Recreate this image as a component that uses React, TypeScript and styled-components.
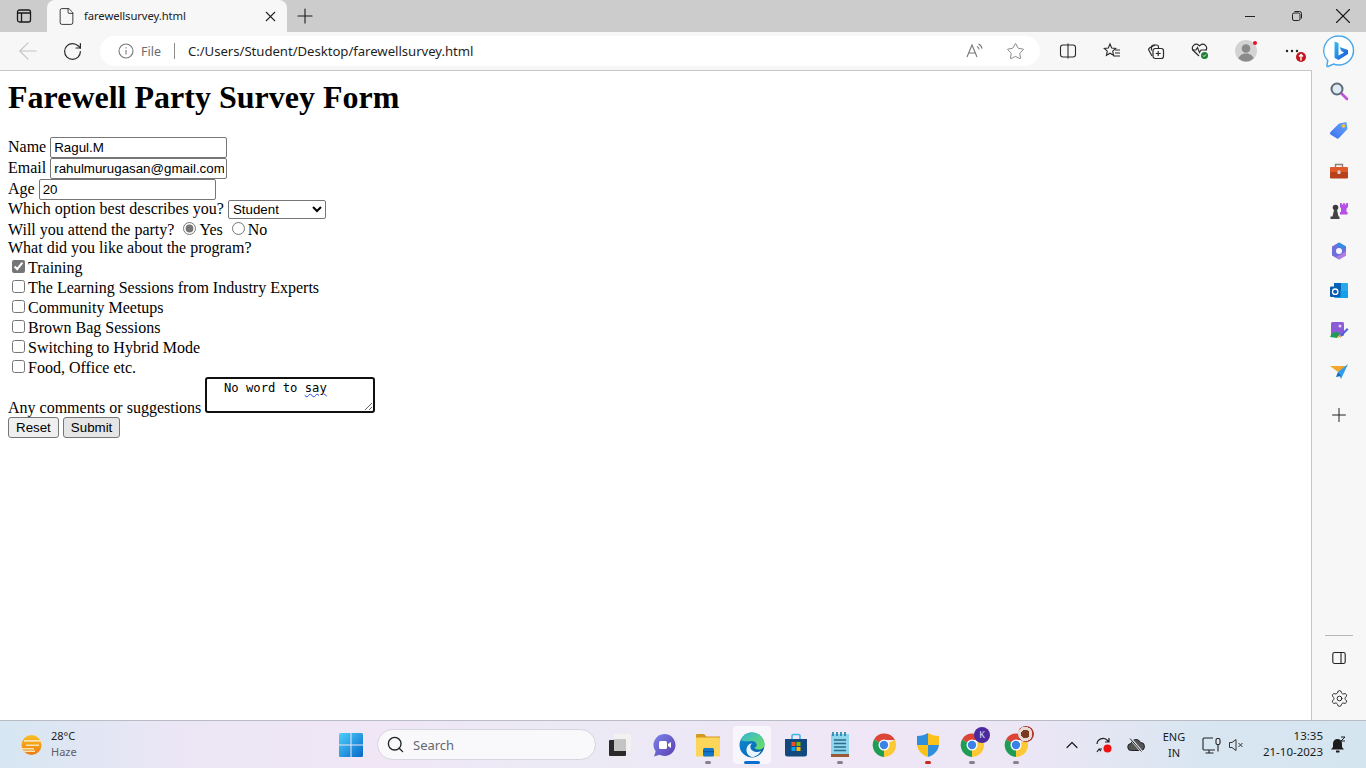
import React from 'react';
import styled, { createGlobalStyle } from 'styled-components';
import { ArrowLeft, ChevronUp, File, Plus, RotateCw, Search, Settings, Star, X } from 'lucide-react';

const GlobalStyle = createGlobalStyle`
  html, body { margin: 0; padding: 0; height: 100%; overflow: hidden; background: #fff; }
  * { box-sizing: border-box; }
`;

const uiFont = `'Noto Sans', 'Open Sans', sans-serif`;

const Window = styled.div`
  width: 1366px;
  height: 768px;
  display: flex;
  flex-direction: column;
  overflow: hidden;
  font-family: ${uiFont};
`;

const TabStrip = styled.div`
  height: 32px;
  flex: none;
  display: flex;
  align-items: stretch;
  background: #cccccc;
`;

const StripButton = styled.div<{ $w: number }>`
  width: ${p => p.$w}px;
  flex: none;
  display: flex;
  align-items: center;
  justify-content: center;
  color: #1a1a1a;
`;

const Tab = styled.div`
  width: 240px;
  flex: none;
  display: flex;
  align-items: center;
  background: #f7f7f7;
  border-radius: 8px 8px 0 0;
  padding: 0 8px 0 10px;
  color: #222;
`;

const TabTitle = styled.span`
  flex: 1;
  margin: 0 0 2px 8px;
  font-size: 11.3px;
  letter-spacing: -0.1px;
`;

const Spacer = styled.div`
  flex: 1;
`;

const Toolbar = styled.div`
  height: 38px;
  flex: none;
  display: flex;
  align-items: center;
  background: #f7f7f7;
`;

const ToolButton = styled.div<{ $w: number; $muted?: boolean }>`
  width: ${p => p.$w}px;
  height: 38px;
  flex: none;
  display: flex;
  align-items: center;
  justify-content: center;
  color: ${p => (p.$muted ? '#c4c4c4' : '#2b2b2b')};
`;

const AddressBar = styled.div`
  width: 940px;
  height: 30px;
  flex: none;
  display: flex;
  align-items: center;
  background: #fff;
  border-radius: 15px;
  padding-left: 18px;
  margin-right: 6px;
`;

const FileLabel = styled.span`
  margin-left: 7px;
  font-size: 12.5px;
  color: #6b6b6b;
`;

const AddressDivider = styled.span`
  width: 1px;
  height: 16px;
  margin: 0 13px;
  background: #8c8c8c;
`;

const AddressText = styled.span`
  flex: 1;
  font-size: 13.2px;
  color: #1f1f1f;
  letter-spacing: -0.05px;
`;

const AddressAction = styled.div`
  width: 40px;
  display: flex;
  justify-content: center;
  color: #777;
`;

const Middle = styled.div`
  flex: 1;
  min-height: 0;
  display: flex;
`;

const Page = styled.main`
  flex: 1;
  border-top: 1px solid #c6c6c6;
  padding: 8px;
  background: #fff;
  color: #000;
  font-family: 'Liberation Serif', 'Times New Roman', serif;
  font-size: 16px;
`;

const Heading = styled.h1`
  margin: 0 0 21px;
  font-size: 32px;
  font-weight: bold;
`;

const TextField = styled.input`
  width: 177px;
  height: 21px;
  padding: 1px 2px 1px 3px;
  border: 1px solid #767676;
  border-radius: 2px;
  font: 13.33px 'Liberation Sans', Arial, sans-serif;
  color: #000;
  background: #fff;
`;

const Dropdown = styled.select`
  width: 98px;
  height: 19px;
  border: 1px solid #767676;
  border-radius: 2px;
  font: 13.33px 'Liberation Sans', Arial, sans-serif;
  color: #000;
  background: #fff;
`;

const Choice = styled.input`
  accent-color: #767676;
`;

const Comments = styled.div`
  display: inline-block;
  width: 170px;
  height: 36px;
  margin-left: 4px;
  padding: 3px 2px 2px;
  border: 2px solid #101010;
  border-radius: 3px;
  overflow: auto;
  resize: both;
  white-space: pre;
  font: 12.2px/13px 'DejaVu Sans Mono', 'Liberation Mono', monospace;
  color: #000;
`;

const Misspelled = styled.span`
  text-decoration: underline wavy #1f45d8 1px;
`;

const FormButton = styled.button<{ $hover?: boolean }>`
  height: 21px;
  padding: 1px 7px;
  border: 1px solid #767676;
  border-radius: 3px;
  background: ${p => (p.$hover ? '#e5e5e5' : '#efefef')};
  font: 13.33px 'Liberation Sans', Arial, sans-serif;
  color: #000;
`;

const Sidebar = styled.aside`
  width: 55px;
  flex: none;
  display: flex;
  flex-direction: column;
  background: #f7f7f7;
  border-left: 1px solid #c6c6c6;
  padding: 1px 0 2px;
`;

const SideCell = styled.div<{ $h?: number }>`
  height: ${p => p.$h ?? 40}px;
  flex: none;
  display: flex;
  align-items: center;
  justify-content: center;
  color: #222;
`;

const SideDivider = styled.div`
  width: 28px;
  height: 1px;
  margin: auto 0 2px 13px;
  background: #b8b8b8;
`;

const Taskbar = styled.footer`
  height: 48px;
  flex: none;
  display: flex;
  align-items: center;
  border-top: 1px solid #b9bcc2;
  background: linear-gradient(90deg, #d6e6f2 0%, #ebe6f5 12%, #f0e6f6 28%, #ebeaf5 40%, #efe6f6 62%, #ebe6f5 76%, #d8e6f1 88%, #d5e5f0 100%);
  color: #1c1c1c;
`;

const Weather = styled.div`
  width: 335px;
  flex: none;
  display: flex;
  align-items: center;
  padding-left: 19px;
`;

const WeatherText = styled.div`
  margin: 0 0 2px 8px;
  font-size: 11px;
  line-height: 16px;
`;

const Muted = styled.div`
  color: #5e5e66;
`;

const StartButton = styled.div`
  width: 32px;
  display: flex;
  justify-content: center;
  flex: none;
`;

const SearchBox = styled.div`
  width: 219px;
  height: 31px;
  margin: 0 2px 0 10px;
  flex: none;
  display: flex;
  align-items: center;
  padding-left: 8px;
  border: 1px solid #d6d6de;
  border-radius: 16px;
  background: #f9f9fc;
  color: #222;
`;

const SearchLabel = styled.span`
  margin-left: 8px;
  font-size: 13px;
  color: #66666e;
`;

const AppCell = styled.div<{ $active?: boolean }>`
  position: relative;
  width: 38px;
  height: 38px;
  margin: 0 3px;
  flex: none;
  display: flex;
  align-items: center;
  justify-content: center;
  border-radius: 4px;
  background: ${p => (p.$active ? '#f8f5fc' : 'transparent')};
`;

const RunDot = styled.span<{ $color: string; $wide?: boolean }>`
  position: absolute;
  bottom: 0;
  left: 50%;
  transform: translateX(-50%);
  width: ${p => (p.$wide ? 16 : 6)}px;
  height: 3px;
  border-radius: 2px;
  background: ${p => p.$color};
`;

const Tray = styled.div`
  flex: 1;
  display: flex;
  align-items: center;
  padding-left: 18px;
`;

const TrayCell = styled.div<{ $w: number }>`
  width: ${p => p.$w}px;
  flex: none;
  display: flex;
  justify-content: center;
  color: #222;
`;

const Lang = styled.div`
  width: 44px;
  flex: none;
  text-align: center;
  font-size: 11px;
  line-height: 16px;
`;

const Clock = styled.div`
  width: 79px;
  margin-bottom: 2px;
  flex: none;
  text-align: right;
  font-size: 11.5px;
  line-height: 16px;
`;

const TabsIcon = () => (
  <svg width="16" height="16" viewBox="0 0 16 16" fill="none" stroke="#1a1a1a" strokeWidth="1.3">
    <rect x="1.5" y="2" width="13" height="12" rx="2" />
    <path d="M1.5 5h13M5.5 5v9" />
  </svg>
);

const MinimizeIcon = () => (
  <svg width="12" height="12" viewBox="0 0 12 12" stroke="#222"><path d="M1 6.5h10" /></svg>
);

const RestoreIcon = () => (
  <svg width="12" height="12" viewBox="0 0 12 12" fill="none" stroke="#222">
    <rect x="1.5" y="3" width="7.5" height="7.5" rx="1.5" />
    <path d="M3.5 1.5h5a2 2 0 0 1 2 2v5" />
  </svg>
);

const ReadAloudIcon = () => (
  <svg width="20" height="18" viewBox="0 0 20 18" fill="none" stroke="#777" strokeWidth="1.1">
    <path d="M2 15 7 3l5 12M3.6 11h6.8" />
    <path d="M12 4.5c1.2.6 2 1.7 2.2 3M13.5 2c2 .9 3.2 2.600 3.500 4.600" />
  </svg>
);

const SplitIcon = () => (
  <svg width="18" height="18" viewBox="0 0 18 18" fill="none" stroke="#2b2b2b" strokeWidth="1.1">
    <rect x="1.500" y="3" width="15" height="12" rx="2.500" />
    <path d="M9 1.500v15" />
  </svg>
);

const FavouritesIcon = () => (
  <svg width="18" height="18" viewBox="0 0 18 18" fill="none" stroke="#2b2b2b" strokeWidth="1.1">
    <path d="M7 2l1.700 4 4 .4-3 2.700.9 4.200L7 11.200 3.400 13.300l.9-4.200-3-2.700 4-.4z" />
    <path d="M12 8h5M12 11h5M10.500 14H17" />
  </svg>
);

const CollectionsIcon = () => (
  <svg width="18" height="18" viewBox="0 0 18 18" fill="none" stroke="#2b2b2b" strokeWidth="1.2">
    <path d="M5 14 2 8.500a2 2 0 0 1 .8-2.700L8 3" />
    <path d="M4.500 8.500V5a2 2 0 0 1 2-2h3a2 2 0 0 1 2 2v1" />
    <rect x="6" y="6.500" width="10.500" height="10" rx="2.200" fill="#f7f7f7" />
    <path d="M11.200 9v5M8.700 11.500h5" />
  </svg>
);

const HealthIcon = () => (
  <svg width="20" height="20" viewBox="0 0 20 20" fill="none">
    <path d="M9 15 3.300 9.500a3.800 3.800 0 0 1 5.400-5.300L9.500 5l.8-.8a3.800 3.800 0 0 1 5.400 5.300" stroke="#2b2b2b" strokeWidth="1.2" />
    <path d="M2 9h4l1.500-2.500 2 5 1.500-2.500h5" stroke="#2b2b2b" strokeWidth="1.100" />
    <circle cx="14.500" cy="14.500" r="3.500" fill="#1e7d32" />
    <path d="m13 14.500 1 1 2-2" stroke="#fff" />
  </svg>
);

const ProfileIcon = () => (
  <svg width="24" height="24" viewBox="0 0 24 24">
    <circle cx="13" cy="12" r="11" fill="#d3d3d3" />
    <circle cx="13" cy="9.500" r="4.300" fill="#8a8a8a" />
    <path d="M5.500 19.500c1-3.500 4-5 7.500-5s6.500 1.500 7.500 5a11 11 0 0 1-15 0z" fill="#8a8a8a" />
    <circle cx="22" cy="4" r="2" fill="#e81123" />
  </svg>
);

const MoreIcon = () => (
  <svg width="32" height="22" viewBox="0 0 32 22">
    <circle cx="13" cy="11" r="1.200" fill="#222" />
    <circle cx="18" cy="11" r="1.200" fill="#222" />
    <circle cx="23" cy="11" r="1.200" fill="#222" />
    <circle cx="27" cy="17" r="5" fill="#c4161c" />
    <path d="M27 20.500v-6M25 16.500l2-2 2 2" stroke="#fff" strokeWidth="1.400" fill="none" />
  </svg>
);

const BingIcon = () => (
  <svg width="32" height="34" viewBox="0 0 32 34">
    <defs>
      <linearGradient id="bing" x1="0" y1="0" x2="1" y2="1">
        <stop offset="0" stopColor="#35c1f1" />
        <stop offset="1" stopColor="#1b4fd8" />
      </linearGradient>
    </defs>
    <path d="M16 2a14.500 14.500 0 0 1 0 29c-2 0-4-.4-5.500-1L5 32.500c-.8.300-1.300-.2-1.100-1l.9-5A14.500 14.500 0 0 1 16 2z" fill="#fff" stroke="#4aa8ee" strokeWidth="1.500" />
    <path d="M11.500 7.500l4 1.400v12.500l5.500-3-2.700-1.300-1.700-4.200 8.400 3v4L15.500 26l-4-2.200z" fill="url(#bing)" />
  </svg>
);

const MagnifierIcon = () => (
  <svg width="20" height="20" viewBox="0 0 20 20" fill="none">
    <path d="m12 12 6 6" stroke="#c34fe0" strokeWidth="2.600" strokeLinecap="round" />
    <circle cx="8" cy="8" r="5.500" fill="#dfeaf5" stroke="#5d6a78" strokeWidth="2" />
  </svg>
);

const TagIcon = () => (
  <svg width="20" height="20" viewBox="0 0 20 20">
    <defs>
      <linearGradient id="tag" x1="0" y1="1" x2="1" y2="0">
        <stop offset="0" stopColor="#3b6ff0" />
        <stop offset="1" stopColor="#6aa8f8" />
      </linearGradient>
    </defs>
    <path d="M1.500 11 10 2.500 17.500 1 18.500 8 10 17a2 2 0 0 1-2.800 0L1.500 13.500a1.800 1.800 0 0 1 0-2.500z" fill="url(#tag)" />
    <circle cx="14.500" cy="5" r="1.800" fill="#f6c445" />
  </svg>
);

const ToolboxIcon = () => (
  <svg width="20" height="18" viewBox="0 0 20 18">
    <path d="M6.500 5V2.500h7V5" fill="none" stroke="#8a8078" strokeWidth="1.400" />
    <rect x="1" y="5" width="18" height="6" rx="1" fill="#e0592a" />
    <rect x="1" y="10" width="18" height="6.500" rx="1" fill="#b8401c" />
    <rect x="8.500" y="8.500" width="3" height="3.500" rx=".6" fill="#d8d2cc" />
  </svg>
);

const GamesIcon = () => (
  <svg width="20" height="20" viewBox="0 0 20 20">
    <path d="M11 2h1.800v1.500h1.400V2h1.600v1.500h1.400V2H19v4l-1.500 1.500V11h1v2.500H11V11h1V7.500L11 6z" fill="#b54fe6" />
    <circle cx="6.500" cy="6.500" r="2.800" fill="#3c3c3c" />
    <path d="M5 9h3l1.500 6.500h1V18H1.500v-2.500h2z" fill="#444" />
  </svg>
);

const CopilotIcon = () => (
  <svg width="20" height="20" viewBox="0 0 20 20" fill="none">
    <path d="M10 1.500 17 5.500v9L10 18.500 3 14.500v-9z" fill="#6d6fdc" />
    <path d="M10 1.500 17 5.500 13 8 8 4z" fill="#2f8fe8" />
    <path d="M17 10v4.500L10 18.500 7 16l6-3z" fill="#b47be0" />
    <circle cx="10" cy="10" r="3" fill="#f7f7f7" />
  </svg>
);

const OutlookIcon = () => (
  <svg width="20" height="20" viewBox="0 0 20 20">
    <rect x="5" y="2" width="14" height="15" rx="1" fill="#28a8ea" />
    <rect x="5" y="2" width="7" height="7" fill="#0364b8" />
    <path d="M8 10h11v7H8z" fill="#14a0e8" />
    <rect x="1" y="5.500" width="10.500" height="10.500" rx="1" fill="#0a5cb0" />
    <circle cx="6.200" cy="10.700" r="2.700" fill="none" stroke="#fff" strokeWidth="1.300" />
  </svg>
);

const DesignerIcon = () => (
  <svg width="20" height="20" viewBox="0 0 20 20">
    <rect x="2" y="1" width="13" height="14" rx="1.500" fill="#8b5bd8" />
    <circle cx="11" cy="5" r="1.500" fill="#e4d4f8" />
    <path d="M1 16c2-5 6-6 10-4l-3 5z" fill="#1f9d55" />
    <path d="m10 15 8-8 1.500 1.500-8 8z" fill="#4b63e0" />
    <path d="m8.500 17 2-3.500 2 2z" fill="#f0b429" />
  </svg>
);

const SendIcon = () => (
  <svg width="20" height="18" viewBox="0 0 20 18">
    <path d="M1 4h18L9 10z" fill="#f3a62c" />
    <path d="M19 2 9 10l3 7z" fill="#2d9cf0" />
    <path d="M9 10 7 15l5-1z" fill="#1869b8" />
  </svg>
);

const PanelIcon = () => (
  <svg width="14" height="14" viewBox="0 0 14 14" fill="none" stroke="#222" strokeWidth="1.100">
    <rect x=".8" y="1.500" width="12.400" height="11" rx="1.800" />
    <path d="M9 1.500v11" />
  </svg>
);

const SunIcon = () => (
  <svg width="24" height="24" viewBox="0 0 24 24">
    <defs>
      <linearGradient id="sun" x1="0" y1="0" x2="0" y2="1">
        <stop offset="0" stopColor="#fbbf24" />
        <stop offset="1" stopColor="#ee7a0c" />
      </linearGradient>
    </defs>
    <circle cx="12.500" cy="12" r="10" fill="url(#sun)" />
    <path d="M5 7h18v1.800H5zM7 11.500h13v1.500H7zM1 15h14v1.500H1zM4 17.500h12V19H4z" fill="#f6e3b4" />
  </svg>
);

const WindowsIcon = () => (
  <svg width="24" height="24" viewBox="0 0 24 24">
    <defs>
      <linearGradient id="win" x1="0" y1="0" x2="1" y2="1">
        <stop offset="0" stopColor="#4fd0fb" />
        <stop offset="1" stopColor="#0567c8" />
      </linearGradient>
    </defs>
    <path d="M0 1.500A1.500 1.500 0 0 1 1.500 0h10v11.500H0zM12.500 0h10A1.500 1.500 0 0 1 24 1.500v10H12.500zM0 12.500h11.500V24h-10A1.500 1.500 0 0 1 0 22.500zM12.500 12.500H24v10a1.500 1.500 0 0 1-1.500 1.500h-10z" fill="url(#win)" />
  </svg>
);

const TaskViewIcon = () => (
  <svg width="24" height="24" viewBox="0 0 24 24">
    <rect x="6" y="1" width="17" height="17" rx="1" fill="#f2f2f2" />
    <rect x="6" y="6" width="12" height="12" fill="#c8c8c8" />
    <rect x="1" y="7" width="17" height="16" rx="1" fill="#2a2a2a" />
    <rect x="6" y="7" width="12" height="11" fill="#c4c4c4" />
  </svg>
);

const MeetIcon = () => (
  <svg width="24" height="24" viewBox="0 0 24 24">
    <defs>
      <linearGradient id="meet" x1="0" y1="0" x2="1" y2="1">
        <stop offset="0" stopColor="#7b83eb" />
        <stop offset="1" stopColor="#5b3fb0" />
      </linearGradient>
    </defs>
    <path d="M12.500 1a11 11 0 1 1-5 20.800L2 23.500l1.700-5A11 11 0 0 1 12.500 1z" fill="url(#meet)" />
    <rect x="7" y="8" width="8" height="8" rx="1.500" fill="#fff" />
    <path d="m16 11 3-2v6l-3-2z" fill="#fff" />
  </svg>
);

const ExplorerIcon = () => (
  <svg width="26" height="24" viewBox="0 0 26 24">
    <path d="M1 2a1 1 0 0 1 1-1h7l2.500 2.500H25V8H1z" fill="#d39a1f" />
    <rect x="1" y="4.500" width="24" height="19" rx="1" fill="#fbd65a" />
    <rect x="8" y="15" width="11" height="8.500" rx="1.500" fill="#1277c9" />
    <rect x="8" y="18" width="11" height="1.200" fill="#0a5ba0" />
  </svg>
);

const EdgeIcon = () => (
  <svg width="26" height="26" viewBox="0 0 26 26">
    <defs>
      <linearGradient id="edgeA" x1="0" y1="0" x2="1" y2="1">
        <stop offset="0" stopColor="#0c8fd8" />
        <stop offset="1" stopColor="#0a5aa8" />
      </linearGradient>
      <linearGradient id="edgeB" x1="0" y1="0" x2="1" y2="1">
        <stop offset="0" stopColor="#34b7d8" />
        <stop offset="1" stopColor="#6fe05a" />
      </linearGradient>
    </defs>
    <circle cx="13" cy="13" r="12.500" fill="url(#edgeA)" />
    <path d="M2 8C4 3 8 .5 13 .5 20 .5 25.500 6 25.500 12.500c0 3-2.500 5-6 5-2.500 0-4-1-4-2 3 0 3.500-6-2.500-6.500C8 9 4 10 2 8z" fill="url(#edgeB)" />
    <path d="M13 25c-4-1-6-4.500-5.500-8 .5-3.500 3-5.500 5.500-5.500-1.500 1-2 3-1.500 4.500 1 3.500 6 5 10.500 3-2 3.500-5.500 6-9 6z" fill="#e8f4fb" />
  </svg>
);

const StoreIcon = () => (
  <svg width="24" height="24" viewBox="0 0 24 24">
    <path d="M8 6V3a1.500 1.500 0 0 1 1.500-1.500h5A1.500 1.500 0 0 1 16 3v3" fill="none" stroke="#3fb4e8" strokeWidth="1.600" />
    <path d="M1 6h22v15a2.500 2.500 0 0 1-2.500 2.500h-17A2.500 2.500 0 0 1 1 21z" fill="#13487f" />
    <rect x="7.500" y="9" width="4" height="4" fill="#f25022" />
    <rect x="12.500" y="9" width="4" height="4" fill="#7fba00" />
    <rect x="7.500" y="14" width="4" height="4" fill="#00a4ef" />
    <rect x="12.500" y="14" width="4" height="4" fill="#ffb900" />
  </svg>
);

const NotepadIcon = () => (
  <svg width="20" height="26" viewBox="0 0 20 26">
    <rect x="1" y="2" width="18" height="21" fill="#8ed6ee" />
    <path d="M3 0v4M7 0v4M11 0v4M15 0v4" stroke="#1b7fa8" strokeWidth="1.600" />
    <path d="M4 8h12M4 11.500h12M4 15h12M4 18.500h12" stroke="#2c6c8c" strokeWidth="1.400" />
    <rect x="1" y="22" width="18" height="3" fill="#9a5a34" />
  </svg>
);

const ChromeIcon = () => (
  <svg width="24" height="24" viewBox="0 0 24 24">
    <path d="M12 12 2 6.500A12 12 0 0 1 23 7H12z" fill="#db4437" />
    <path d="M12 12 23 7a12 12 0 0 1-11 17z" fill="#fcc934" />
    <path d="M12 12l0 12A12 12 0 0 1 2 6.500z" fill="#1f9d55" />
    <circle cx="12" cy="12" r="5.500" fill="#fff" />
    <circle cx="12" cy="12" r="4.200" fill="#3b82e8" />
  </svg>
);

const BadgedChrome = styled.div`
  position: relative;
  width: 24px;
  height: 24px;
`;

const InitialBadge = styled.span`
  position: absolute;
  top: -6px;
  right: -6px;
  width: 16px;
  height: 16px;
  border-radius: 50%;
  background: #4b2a9e;
  color: #e8e0f8;
  font-size: 9px;
  line-height: 16px;
  text-align: center;
`;

const PhotoBadge = styled.span`
  position: absolute;
  top: -7px;
  right: -6px;
  width: 16px;
  height: 16px;
  border-radius: 50%;
  background: radial-gradient(circle at 45% 50%, #7a3a22 0 35%, #e6dcd4 36% 60%, #b03a30 61% 75%, #efe8e0 76%);
`;

const ShieldIcon = () => (
  <svg width="24" height="26" viewBox="0 0 24 26">
    <path d="M12 1v12H1V4c4 0 8-1 11-3z" fill="#2f8fdc" />
    <path d="M12 1c3 2 7 3 11 3v9H12z" fill="#fcc21b" />
    <path d="M1 13h11v12C6 23 2 19 1 13z" fill="#fcc21b" />
    <path d="M12 13h11c-1 6-5 10-11 12z" fill="#2f8fdc" />
  </svg>
);

const SyncIcon = () => (
  <svg width="18" height="18" viewBox="0 0 18 18" fill="none">
    <path d="M2 8a6 6 0 0 1 10-4l2 2M14 2v4h-4M2 16l2-3h3M4 13a6 6 0 0 0 2 2" stroke="#222" strokeWidth="1.200" />
    <circle cx="12.500" cy="12.500" r="4" fill="#f01010" />
  </svg>
);

const CloudOffIcon = () => (
  <svg width="18" height="16" viewBox="0 0 18 16">
    <path d="M4.500 13.500a3.500 3.500 0 0 1-.5-7 5 5 0 0 1 9.500-1 4 4 0 0 1 0 8z" fill="#555" stroke="#222" />
    <path d="M3 1l12 14" stroke="#e8eef4" strokeWidth="2.500" />
    <path d="M3 1.500l11.500 13" stroke="#222" />
  </svg>
);

const MonitorIcon = () => (
  <svg width="20" height="18" viewBox="0 0 20 18" fill="none" stroke="#222" strokeWidth="1.100">
    <path d="M13 14H2a1 1 0 0 1-1-1V3a1 1 0 0 1 1-1h9" />
    <path d="M7 14v3M3.500 17h8" />
    <path d="M16 2.500v13" />
    <rect x="14" y="2.500" width="4" height="6" rx="1.500" fill="#e4ebf3" />
  </svg>
);

const MuteIcon = () => (
  <svg width="16" height="16" viewBox="0 0 16 16" fill="none" stroke="#333" strokeWidth="1">
    <path d="M1.500 5.500h2.500L8 2.500v11L4 10.500H1.500zM10.500 6l4 4M14.500 6l-4 4" />
  </svg>
);

const SnoozeIcon = () => (
  <svg width="16" height="18" viewBox="0 0 16 18">
    <path d="M6.500 3a4.500 4.500 0 0 1 4.500 4.500V11l2 2.500H0L2 11V7.500A4.500 4.500 0 0 1 6.500 3z" fill="#1c1c1c" />
    <rect x="5" y="14.500" width="3.500" height="2" fill="#1c1c1c" />
    <path d="M10 1h4l-4 4h4" stroke="#1c1c1c" strokeWidth="1" fill="none" />
  </svg>
);

const programOptions = [
  'The Learning Sessions from Industry Experts',
  'Community Meetups',
  'Brown Bag Sessions',
  'Switching to Hybrid Mode',
  'Food, Office etc.',
];

const sideApps = [
  <MagnifierIcon key="search" />,
  <TagIcon key="tag" />,
  <ToolboxIcon key="tools" />,
  <GamesIcon key="games" />,
  <CopilotIcon key="copilot" />,
  <OutlookIcon key="outlook" />,
  <DesignerIcon key="designer" />,
  <SendIcon key="send" />,
];

export default function App() {
  return (
    <Window>
      <GlobalStyle />
      <TabStrip>
        <StripButton $w={47}>
          <TabsIcon />
        </StripButton>
        <Tab>
          <File size={19} strokeWidth={1.1} />
          <TabTitle>farewellsurvey.html</TabTitle>
          <X size={17} strokeWidth={1.5} />
        </Tab>
        <StripButton $w={35}>
          <Plus size={24} strokeWidth={1.1} />
        </StripButton>
        <Spacer />
        <StripButton $w={46}>
          <MinimizeIcon />
        </StripButton>
        <StripButton $w={47}>
          <RestoreIcon />
        </StripButton>
        <StripButton $w={46}>
          <X size={26} strokeWidth={1} />
        </StripButton>
      </TabStrip>

      <Toolbar>
        <ToolButton $w={56} $muted>
          <ArrowLeft size={28} strokeWidth={1} />
        </ToolButton>
        <ToolButton $w={32}>
          <RotateCw size={21} strokeWidth={1.4} />
        </ToolButton>
        <ToolButton $w={12} />
        <AddressBar>
          <svg width="16" height="16" viewBox="0 0 16 16" fill="none" stroke="#777" strokeWidth="1.100">
            <circle cx="8" cy="8" r="7" />
            <path d="M8 7v4.500M8 4.300v1.200" />
          </svg>
          <FileLabel>File</FileLabel>
          <AddressDivider />
          <AddressText>C:/Users/Student/Desktop/farewellsurvey.html</AddressText>
          <AddressAction>
            <ReadAloudIcon />
          </AddressAction>
          <AddressAction>
            <Star size={19} strokeWidth={1.1} />
          </AddressAction>
          <ToolButton $w={5} />
        </AddressBar>
        <ToolButton $w={44}>
          <SplitIcon />
        </ToolButton>
        <ToolButton $w={44}>
          <FavouritesIcon />
        </ToolButton>
        <ToolButton $w={44}>
          <CollectionsIcon />
        </ToolButton>
        <ToolButton $w={44}>
          <HealthIcon />
        </ToolButton>
        <ToolButton $w={46}>
          <ProfileIcon />
        </ToolButton>
        <ToolButton $w={44}>
          <MoreIcon />
        </ToolButton>
        <ToolButton $w={54}>
          <BingIcon />
        </ToolButton>
      </Toolbar>

      <Middle>
        <Page>
          <Heading>Farewell Party Survey Form</Heading>
          <form>
            Name <TextField defaultValue="Ragul.M" />
            <br />
            Email <TextField defaultValue="rahulmurugasan@gmail.com" />
            <br />
            Age <TextField defaultValue="20" />
            <br />
            Which option best describes you?{' '}
            <Dropdown defaultValue="Student">
              <option>Student</option>
            </Dropdown>
            <br />
            Will you attend the party? <Choice type="radio" name="attend" defaultChecked />
            Yes <Choice type="radio" name="attend" />
            No
            <br />
            What did you like about the program?
            <br />
            <Choice type="checkbox" defaultChecked />
            Training
            {programOptions.map(option => (
              <React.Fragment key={option}>
                <br />
                <Choice type="checkbox" />
                {option}
              </React.Fragment>
            ))}
            <br />
            Any comments or suggestions
            <Comments>
              {'  No word to '}
              <Misspelled>say</Misspelled>
            </Comments>
            <br />
            <FormButton type="reset">Reset</FormButton> <FormButton type="submit" $hover>Submit</FormButton>
          </form>
        </Page>
        <Sidebar>
          {sideApps.map(icon => (
            <SideCell key={icon.key}>{icon}</SideCell>
          ))}
          <SideCell $h={48}>
            <Plus size={22} strokeWidth={1.1} />
          </SideCell>
          <SideDivider />
          <SideCell>
            <PanelIcon />
          </SideCell>
          <SideCell>
            <Settings size={19} strokeWidth={1.2} />
          </SideCell>
        </Sidebar>
      </Middle>

      <Taskbar>
        <Weather>
          <SunIcon />
          <WeatherText>
            28°C
            <Muted>Haze</Muted>
          </WeatherText>
        </Weather>
        <StartButton>
          <WindowsIcon />
        </StartButton>
        <SearchBox>
          <Search size={19} strokeWidth={1.7} />
          <SearchLabel>Search</SearchLabel>
        </SearchBox>
        <AppCell>
          <TaskViewIcon />
        </AppCell>
        <AppCell>
          <MeetIcon />
        </AppCell>
        <AppCell>
          <ExplorerIcon />
          <RunDot $color="#85808c" />
        </AppCell>
        <AppCell $active>
          <EdgeIcon />
          <RunDot $color="#0a6fd0" $wide />
        </AppCell>
        <AppCell>
          <StoreIcon />
        </AppCell>
        <AppCell>
          <NotepadIcon />
          <RunDot $color="#85808c" />
        </AppCell>
        <AppCell>
          <ChromeIcon />
        </AppCell>
        <AppCell>
          <ShieldIcon />
          <RunDot $color="#c42b1c" />
        </AppCell>
        <AppCell>
          <BadgedChrome>
            <ChromeIcon />
            <InitialBadge>K</InitialBadge>
          </BadgedChrome>
          <RunDot $color="#85808c" />
        </AppCell>
        <AppCell>
          <BadgedChrome>
            <ChromeIcon />
            <PhotoBadge />
          </BadgedChrome>
          <RunDot $color="#85808c" />
        </AppCell>
        <Tray>
          <TrayCell $w={32}>
            <ChevronUp size={20} strokeWidth={1.5} />
          </TrayCell>
          <TrayCell $w={32}>
            <SyncIcon />
          </TrayCell>
          <TrayCell $w={32}>
            <CloudOffIcon />
          </TrayCell>
          <Lang>
            ENG
            <br />
            IN
          </Lang>
          <TrayCell $w={32}>
            <MonitorIcon />
          </TrayCell>
          <TrayCell $w={16}>
            <MuteIcon />
          </TrayCell>
          <Clock>
            13:35
            <br />
            21-10-2023
          </Clock>
          <TrayCell $w={32}>
            <SnoozeIcon />
          </TrayCell>
        </Tray>
      </Taskbar>
    </Window>
  );
}
